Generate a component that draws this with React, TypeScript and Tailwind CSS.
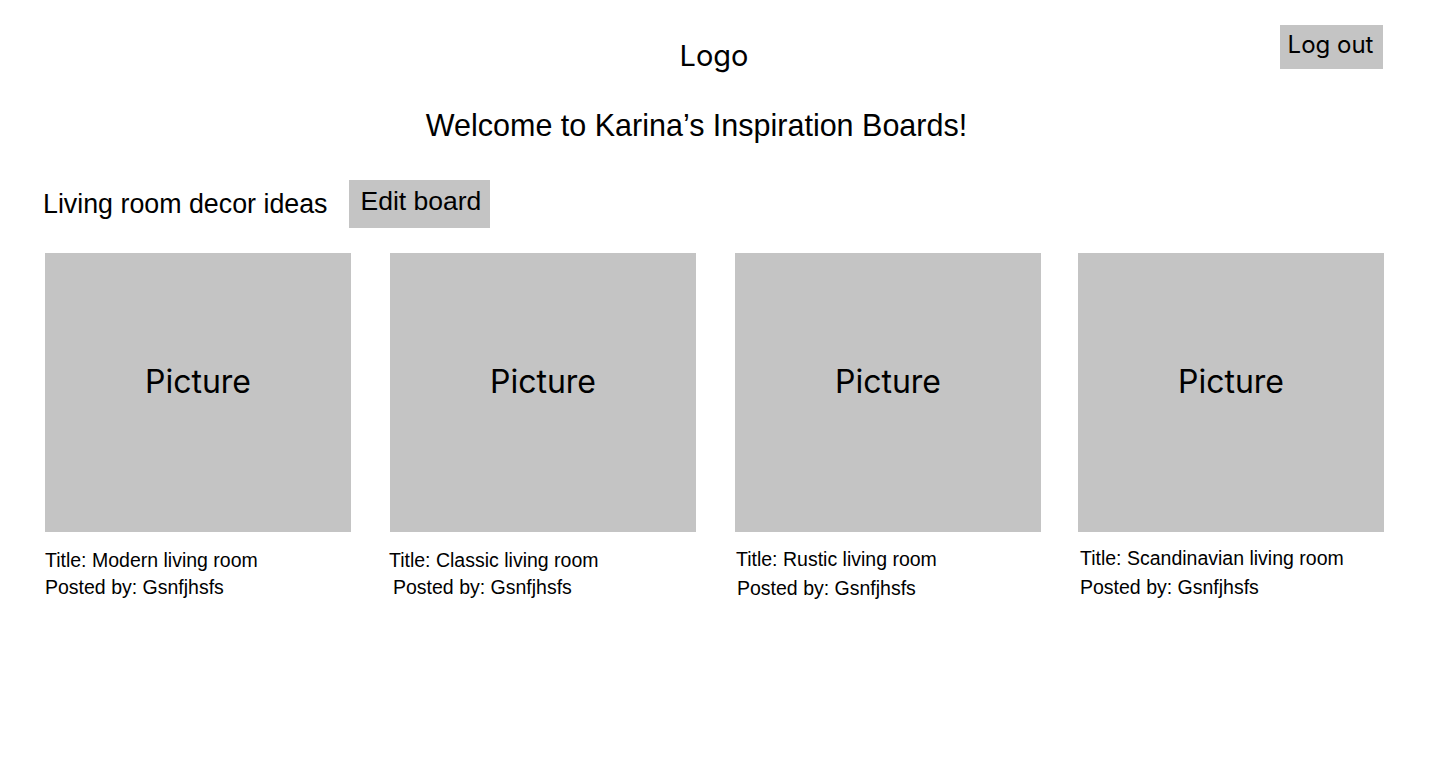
import React from "react";

const inter = "font-['Inter',sans-serif]";
const arial = "font-['Liberation_Sans',Arial,sans-serif]";

type Card = { title: string; tx: string; px: string; ty: string; py: string };

const cards: Card[] = [
  { title: "Modern living room", tx: "ml-0", px: "ml-0", ty: "mt-[15px]", py: "mt-0" },
  { title: "Classic living room", tx: "-ml-[1px]", px: "ml-[3px]", ty: "mt-[15px]", py: "mt-0" },
  { title: "Rustic living room", tx: "ml-[1px]", px: "ml-[2px]", ty: "mt-[14px]", py: "mt-[2px]" },
  { title: "Scandinavian living room", tx: "ml-[2px]", px: "ml-[2px]", ty: "mt-[13px]", py: "mt-[2px]" },
];

export default function App() {
  return (
    <div className="min-h-screen bg-white text-black">
      <header className="grid grid-cols-[1fr_auto_1fr] items-start pl-[45px] pr-[46px] pt-[25px]">
        <div />
        <div className={`${inter} mt-[14px] text-[29px] leading-[34px]`}>Logo</div>
        <div className="justify-self-end">
          <button
            className={`${inter} flex h-[44px] w-[103px] items-center justify-center bg-[#c4c4c4] pb-[4px] pr-[2px] text-[24px] leading-none`}
          >
            Log out
          </button>
        </div>
      </header>

      <h1 className={`${arial} mt-[35px] pr-[36px] text-center text-[30.5px] leading-[34px]`}>
        Welcome to Karina’s Inspiration Boards!
      </h1>

      <div className="mt-[38px] flex items-center gap-[21px] pl-[43px]">
        <span className={`${arial} text-[26.8px] leading-[32px]`}>Living room decor ideas</span>
        <button
          className={`${arial} flex h-[48px] w-[141px] items-center bg-[#c4c4c4] pb-[6px] pl-[12px] text-[26.5px] leading-none`}
        >
          Edit board
        </button>
      </div>

      <div className="mt-[25px] flex pl-[45px]">
        {cards.map((c, i) => (
          <div
            key={c.title}
            className={`flex w-[306px] flex-col ${i === 1 || i === 2 ? "ml-[39px]" : i === 3 ? "ml-[37px]" : ""}`}
          >
            <div className="flex h-[279px] w-[306px] items-center justify-center bg-[#c4c4c4] pb-[22px]">
              <span className={`${inter} text-[32px] leading-none`}>Picture</span>
            </div>
            <div className={`${arial} ${c.ty} ${c.tx} text-[19.5px] leading-[27px]`}>Title: {c.title}</div>
            <div className={`${arial} ${c.py} ${c.px} text-[19.5px] leading-[27px]`}>Posted by: Gsnfjhsfs</div>
          </div>
        ))}
      </div>
    </div>
  );
}
